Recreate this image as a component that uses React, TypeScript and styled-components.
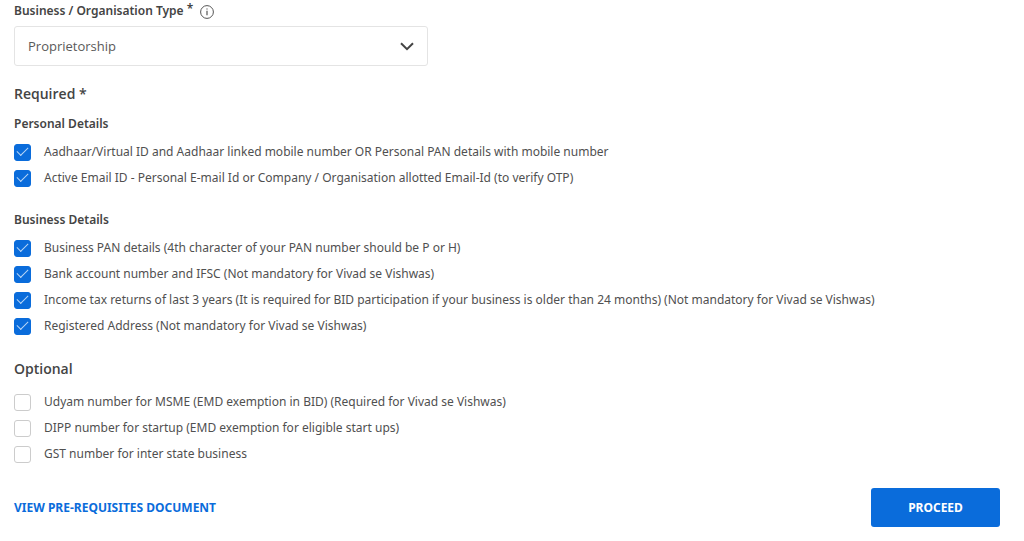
import React, { useId, useState } from 'react';
import styled, { createGlobalStyle } from 'styled-components';

const GlobalStyle = createGlobalStyle`
  *, *::before, *::after { box-sizing: border-box; }
  body {
    margin: 0;
    background: #fff;
    color: #505050;
    font: 12px/18px "Noto Sans", "Open Sans", sans-serif;
  }
`;

const Page = styled.main`
  padding: 0 24px 14px 14px;
`;

const FieldHeader = styled.div`
  display: flex;
  align-items: center;
  height: 21px;
  gap: 7px;
  color: #444;
  font-weight: 600;
`;

const Star = styled.sup`
  font-size: 12px;
  line-height: 0;
  vertical-align: 2px;
`;

const InfoButton = styled.button`
  display: flex;
  padding: 2px 0 0;
  border: 0;
  background: none;
  color: #555;
`;

const SelectBox = styled.div`
  display: grid;
  align-items: center;
  width: 42%;
  min-width: 240px;
  margin-top: 5px;

  & > * { grid-area: 1 / 1; }
  & > svg { justify-self: end; margin-right: 14px; pointer-events: none; }
`;

const Select = styled.select`
  appearance: none;
  width: 100%;
  height: 40px;
  padding: 0 40px 0 13px;
  border: 1px solid #e4e4e4;
  border-radius: 3px;
  background: #fff;
  color: #5a5a5a;
  font: 13px/18px "Open Sans", "Noto Sans", sans-serif;
`;

const Title = styled.h2`
  margin: 0;
  color: #444;
  font: 600 14px/20px "Open Sans", "Noto Sans", sans-serif;
`;

const Group = styled.fieldset`
  min-width: 0;
  margin: 0;
  padding: 0;
  border: 0;
`;

const Legend = styled.legend<{ $gap?: number }>`
  padding: 0;
  margin-bottom: ${p => p.$gap ?? 6}px;
  color: #444;
  font-weight: 600;
`;

const Section = styled.section<{ $top: number }>`
  margin-top: ${p => p.$top}px;
`;

const Groups = styled.div`
  display: grid;
  gap: 20px;
  margin-top: 11px;
`;

const List = styled.ul`
  margin: 0;
  padding: 0;
  list-style: none;
`;

const Item = styled.li`
  display: flex;
  align-items: center;
  gap: 13px;
  min-height: 26px;
`;

const Checkbox = styled.input`
  appearance: none;
  flex: none;
  display: grid;
  place-items: center;
  width: 17px;
  height: 17px;
  margin: 0;
  border: 1px solid #ccc;
  border-radius: 3px;
  background: #fff;

  &:checked {
    border-color: #0a6cdb;
    background: #0a6cdb;
  }
  &:checked::before {
    content: "";
    width: 11px;
    height: 6px;
    margin-bottom: 4px;
    border: solid #b9d6f6;
    border-width: 0 0 1px 1px;
    transform: rotate(-45deg);
  }
`;

const Footer = styled.footer`
  display: flex;
  align-items: center;
  justify-content: space-between;
  margin-top: 21px;
`;

const DocLink = styled.a`
  color: #0a6cdb;
  font-weight: 700;
  text-decoration: none;
`;

const Proceed = styled.button`
  min-width: 129px;
  height: 39px;
  border: 0;
  border-radius: 3px;
  background: #0a6cdb;
  color: #fff;
  font: inherit;
  font-weight: 700;
`;

const personal = [
  'Aadhaar/Virtual ID and Aadhaar linked mobile number OR Personal PAN details with mobile number',
  'Active Email ID - Personal E-mail Id or Company / Organisation allotted Email-Id (to verify OTP)',
];
const business = [
  'Business PAN details (4th character of your PAN number should be P or H)',
  'Bank account number and IFSC (Not mandatory for Vivad se Vishwas)',
  'Income tax returns of last 3 years (It is required for BID participation if your business is older than 24 months) (Not mandatory for Vivad se Vishwas)',
  'Registered Address (Not mandatory for Vivad se Vishwas)',
];
const optional = [
  'Udyam number for MSME (EMD exemption in BID) (Required for Vivad se Vishwas)',
  'DIPP number for startup (EMD exemption for eligible start ups)',
  'GST number for inter state business',
];

function CheckItem({ text, initial }: { text: string; initial: boolean }) {
  const id = useId();
  const [checked, setChecked] = useState(initial);
  return (
    <Item>
      <Checkbox id={id} type="checkbox" checked={checked} onChange={e => setChecked(e.target.checked)} />
      <label htmlFor={id}>{text}</label>
    </Item>
  );
}

function CheckList({ items, checked = false }: { items: string[]; checked?: boolean }) {
  return (
    <List>
      {items.map(text => <CheckItem key={text} text={text} initial={checked} />)}
    </List>
  );
}

export default function App() {
  return (
    <>
      <GlobalStyle />
      <Page>
        <FieldHeader>
          <label htmlFor="org-type">Business / Organisation Type <Star>*</Star></label>
          <InfoButton type="button" aria-label="About organisation types">
            <svg width="14" height="14" viewBox="0 0 14 14" fill="none" stroke="currentColor">
              <circle cx="7" cy="7" r="6.4" />
              <path d="M7 5.8v4.4M7 3.4v1.2" strokeWidth="1.2" />
            </svg>
          </InfoButton>
        </FieldHeader>
        <SelectBox>
          <Select id="org-type" defaultValue="Proprietorship">
            <option>Proprietorship</option>
            <option>Partnership</option>
            <option>Company</option>
          </Select>
          <svg width="14" height="9" viewBox="0 0 14 9" fill="none" stroke="#444" strokeWidth="2" aria-hidden="true">
            <path d="M1 1.2l6 6 6-6" />
          </svg>
        </SelectBox>

        <Section $top={18}>
          <Title>Required *</Title>
          <Groups>
            <Group>
              <Legend>Personal Details</Legend>
              <CheckList items={personal} checked />
            </Group>
            <Group>
              <Legend>Business Details</Legend>
              <CheckList items={business} checked />
            </Group>
          </Groups>
        </Section>

        <Section $top={20}>
          <Group>
            <Legend $gap={10}><Title>Optional</Title></Legend>
            <CheckList items={optional} />
          </Group>
        </Section>

        <Footer>
          <DocLink href="#prerequisites">VIEW PRE-REQUISITES DOCUMENT</DocLink>
          <Proceed type="button">PROCEED</Proceed>
        </Footer>
      </Page>
    </>
  );
}
